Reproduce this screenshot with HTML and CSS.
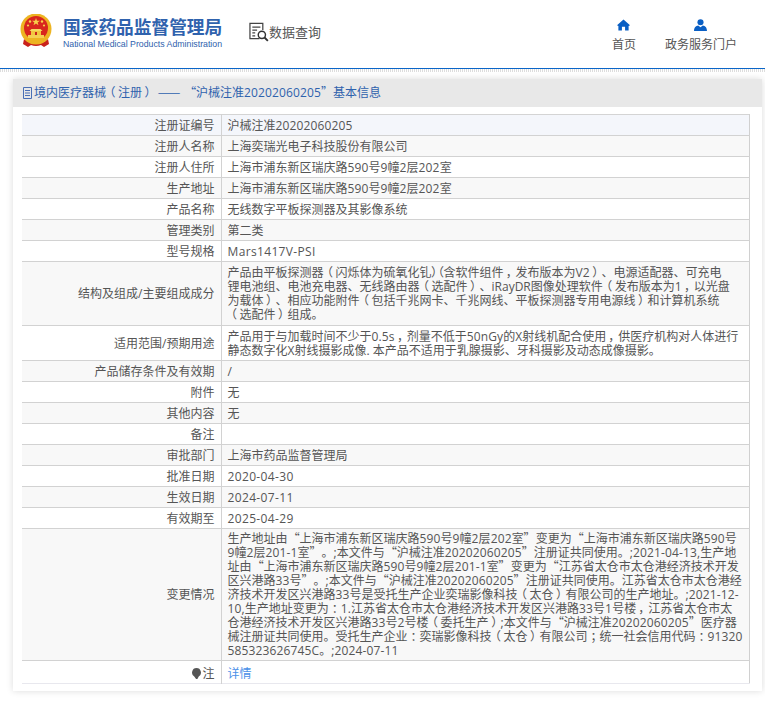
FILE: index.html
```html
<!DOCTYPE html>
<html lang="zh-CN">
<head>
<meta charset="utf-8">
<title>国家药品监督管理局 数据查询</title>
<link rel="stylesheet" href="styles.css">
</head>
<body>
<header class="site-header">
  <div class="brand">
    <svg class="emblem" viewBox="0 0 32 34" aria-hidden="true">
      <path d="M4 25q12 10 24 0l1 5-5 3-3-2q-5 2-10 0l-3 2-5-3z" fill="#c9221c"/>
      <circle cx="16" cy="15" r="15.500" fill="#edb422"/>
      <circle cx="16" cy="14" r="12" fill="#d8261e"/>
      <path d="M6 27q10 6 20 0l-1-3H7z" fill="#edb422"/>
      <path d="M8 21h16v3H8z" fill="#f5cf52"/>
      <path d="M11 17h10v4H11z" fill="#f1c640"/>
      <path d="M9.500 17h13l-2-2h-9z" fill="#f7d860"/>
      <path d="M15 21h2v-3h-2z" fill="#c9221c"/>
      <path d="M16 4l1 2.700h2.900l-2.300 1.700.9 2.800-2.500-1.700-2.500 1.700.9-2.800-2.300-1.700H15z" fill="#f7d04a"/>
      <circle cx="10" cy="7.500" r="1.200" fill="#f7d04a"/><circle cx="22" cy="7.500" r="1.200" fill="#f7d04a"/>
      <circle cx="8" cy="11.500" r="1.100" fill="#f7d04a"/><circle cx="24" cy="11.500" r="1.100" fill="#f7d04a"/>
    </svg>
    <div class="brand-text">
      <div class="brand-cn">国家药品监督管理局</div>
      <div class="brand-en">National Medical Products Administration</div>
    </div>
  </div>
  <div class="query">
    <svg class="query-icon" viewBox="0 0 21 20" aria-hidden="true">
      <path d="M11 17H1V1h13.500v7" fill="none" stroke="#444" stroke-width="1.300"/>
      <path d="M3.500 5h8.500M3.500 8h5M3.500 11h3M3.500 14h3" fill="none" stroke="#444" stroke-width="1.300"/>
      <circle cx="13.500" cy="13" r="3.800" fill="none" stroke="#333" stroke-width="1.500"/>
      <path d="M16.300 15.800l3.500 3.500" stroke="#333" stroke-width="2"/>
    </svg>
    <span>数据查询</span>
  </div>
  <nav class="top-nav">
    <a class="nav-item">
      <svg class="nav-icon" viewBox="0 0 14 12" aria-hidden="true"><path d="M7 0L0 6.200 1.500 7V12h3.800V8h3.400v4h3.800V7L14 6.200z" fill="#0a5fc4"/></svg>
      <span>首页</span>
    </a>
    <a class="nav-item">
      <svg class="nav-icon" viewBox="0 0 14 13" aria-hidden="true"><circle cx="7" cy="3.500" r="3.300" fill="#0a5fc4"/><path d="M0 13c0-4 2-5.500 4.500-6L7 9l2.500-2C12 7.500 14 9 14 13z" fill="#0a5fc4"/></svg>
      <span>政务服务门户</span>
    </a>
  </nav>
</header>
<div class="dots"></div>
<main class="panel">
  <h1 class="panel-title"><svg class="doc" viewBox="0 0 9 12" aria-hidden="true"><path d="M.5.500h8v11h-8zM2 3.500h5M2 6h5M2 8.500h5" fill="none" stroke="#4a6fb5"/></svg>境内医疗器械<span class="p">（</span>注册<span class="p">）</span><span class="dash">——</span><span class="qo">“</span>沪械注准<span class="n">20202060205</span><span class="qc">”</span>基本信息</h1>
  <div class="table-wrap">
  <table class="info">
    <tr class="r hl"><th>注册证编号</th><td>沪械注准<span class="n">20202060205</span></td></tr>
    <tr class="r"><th>注册人名称</th><td>上海奕瑞光电子科技股份有限公司</td></tr>
    <tr class="r"><th>注册人住所</th><td>上海市浦东新区瑞庆路<span class="n">590</span>号<span class="n">9</span>幢<span class="n">2</span>层<span class="n">202</span>室</td></tr>
    <tr class="r"><th>生产地址</th><td>上海市浦东新区瑞庆路<span class="n">590</span>号<span class="n">9</span>幢<span class="n">2</span>层<span class="n">202</span>室</td></tr>
    <tr class="r"><th>产品名称</th><td>无线数字平板探测器及其影像系统</td></tr>
    <tr class="r"><th>管理类别</th><td>第二类</td></tr>
    <tr class="r"><th>型号规格</th><td class="wide">Mars1417V-PSI</td></tr>
    <tr class="h64"><th>结构及组成/主要组成成分</th><td class="long">产品由平板探测器<span class="p">（</span>闪烁体为硫氧化钆<span class="p">）（</span>含软件组件<span class="p">，</span>发布版本为V2<span class="p">）</span>、电源适配器、可充电<br>锂电池组、电池充电器、无线路由器<span class="p">（</span>选配件<span class="p">）</span>、iRayDR图像处理软件<span class="p">（</span>发布版本为<span class="n">1</span><span class="p">，</span>以光盘<br>为载体<span class="p">）</span>、相应功能附件<span class="p">（</span>包括千兆网卡、千兆网线、平板探测器专用电源线<span class="p">）</span>和计算机系统<br><span class="p">（</span>选配件<span class="p">）</span>组成。</td></tr>
    <tr class="h35"><th>适用范围/预期用途</th><td class="long">产品用于与加载时间不少于<span class="n">0.5s</span><span class="p">，</span>剂量不低于<span class="n">50nGy</span>的X射线机配合使用<span class="p">，</span>供医疗机构对人体进行<br>静态数字化X射线摄影成像. 本产品不适用于乳腺摄影、牙科摄影及动态成像摄影。</td></tr>
    <tr class="r"><th>产品储存条件及有效期</th><td>/</td></tr>
    <tr class="r"><th>附件</th><td>无</td></tr>
    <tr class="r"><th>其他内容</th><td>无</td></tr>
    <tr class="r"><th>备注</th><td></td></tr>
    <tr class="r"><th>审批部门</th><td>上海市药品监督管理局</td></tr>
    <tr class="r"><th>批准日期</th><td class="wide">2020-04-30</td></tr>
    <tr class="r"><th>生效日期</th><td class="wide">2024-07-11</td></tr>
    <tr class="r"><th>有效期至</th><td class="wide">2025-04-29</td></tr>
    <tr class="h132"><th>变更情况</th><td class="long">生产地址由<span class="qo">“</span>上海市浦东新区瑞庆路<span class="n">590</span>号<span class="n">9</span>幢<span class="n">2</span>层<span class="n">202</span>室<span class="qc">”</span>变更为<span class="qo">“</span>上海市浦东新区瑞庆路<span class="n">590</span>号<br><span class="n">9</span>幢<span class="n">2</span>层<span class="n">201-1</span>室<span class="qc">”</span>。;本文件与<span class="qo">“</span>沪械注准<span class="n">20202060205</span><span class="qc">”</span>注册证共同使用。;<span class="n">2021-04-13,</span>生产地<br>址由<span class="qo">“</span>上海市浦东新区瑞庆路<span class="n">590</span>号<span class="n">9</span>幢<span class="n">2</span>层<span class="n">201-1</span>室<span class="qc">”</span>变更为<span class="qo">“</span>江苏省太仓市太仓港经济技术开发<br>区兴港路<span class="n">33</span>号<span class="qc">”</span>。;本文件与<span class="qo">“</span>沪械注准<span class="n">20202060205</span><span class="qc">”</span>注册证共同使用。江苏省太仓市太仓港经<br>济技术开发区兴港路<span class="n">33</span>号是受托生产企业奕瑞影像科技<span class="p">（</span>太仓<span class="p">）</span>有限公司的生产地址。;<span class="n">2021-12-</span><br><span class="n">10,</span>生产地址变更为<span class="p">：</span><span class="n">1.</span>江苏省太仓市太仓港经济技术开发区兴港路<span class="n">33</span>号<span class="n">1</span>号楼<span class="p">，</span>江苏省太仓市太<br>仓港经济技术开发区兴港路<span class="n">33</span>号<span class="n">2</span>号楼<span class="p">（</span>委托生产<span class="p">）</span>;本文件与<span class="qo">“</span>沪械注准<span class="n">20202060205</span><span class="qc">”</span>医疗器<br>械注册证共同使用。受托生产企业<span class="p">：</span>奕瑞影像科技<span class="p">（</span>太仓<span class="p">）</span>有限公司<span class="p">；</span>统一社会信用代码<span class="p">：</span><span class="n">91320</span><br><span class="n">585323626745C</span>。;<span class="n">2024-07-11</span></td></tr>
    <tr class="last"><th><svg class="bulb" viewBox="0 0 10 12" aria-hidden="true"><path d="M5 0a5 5 0 0 1 2.500 9.300L6 12H4.500L2.500 9.300A5 5 0 0 1 5 0z" fill="#555"/></svg>注</th><td><a class="more">详情</a></td></tr>
  </table>
  </div>
</main>
</body>
</html>
```
FILE: styles.css
```css
* { box-sizing: border-box; }
html, body { margin: 0; padding: 0; }
body {
  width: 765px;
  height: 701px;
  overflow: hidden;
  background: #fff;
  color: #555;
  font-family: "Open Sans", "Noto Sans CJK SC", sans-serif;
  font-size: 12px;
}
.site-header {
  height: 69px;
  display: flex;
  align-items: flex-start;
  border-bottom: 1px solid #0a66c8;
  padding-left: 20px;
}
.brand { display: flex; gap: 11px; padding-top: 14px; width: 229px; flex: none; }
.emblem { width: 32px; height: 34px; flex: none; }
.brand-text { padding-top: 1px; }
.brand-cn { font-size: 17.700px; line-height: 22px; font-weight: 700; color: #2f62ad; white-space: nowrap; font-family: "Noto Sans CJK SC", sans-serif; }
.brand-en { font-size: 8.750px; line-height: 13px; margin-top: 1px; color: #2f62ad; white-space: nowrap; font-family: "Liberation Sans", sans-serif; }
.query { display: flex; align-items: center; padding-top: 22px; font-size: 13px; line-height: 18px; color: #555; font-family: "Noto Sans CJK SC", sans-serif; }
.query-icon { width: 20px; height: 20px; }
.top-nav { display: flex; margin-left: auto; padding-top: 19px; padding-right: 28px; gap: 29px; }
.nav-item { display: flex; flex-direction: column; align-items: center; color: #555; font-size: 12px; line-height: 16px; font-family: "Noto Sans CJK SC", sans-serif; }
.nav-icon { width: 13px; height: 12px; margin-bottom: 5px; }
.dots { height: 3px; background: repeating-linear-gradient(90deg, #ddd 0 1px, #fff 1px 2px); }
.panel {
  margin: 7px 3px 0 13px;
  box-shadow: 0 0 7px rgba(0,0,0,.14);
  background: #fff;
  height: 612px;
}
.panel-title {
  margin: 0;
  height: 28px;
  background: #e8e8e8;
  padding-left: 10px;
  font-weight: 400;
  font-size: 12px;
  line-height: 28px;
  color: #2f62ad;
  white-space: nowrap;
}
.doc { width: 9px; height: 12px; vertical-align: -2px; margin-right: 2px; }
.p { display: inline-block; width: 12px; line-height: 0; text-align: center; font-feature-settings: "palt"; font-family: "Noto Sans CJK SC", sans-serif; }
.qo, .qc { display: inline-block; width: 12px; line-height: 0; font-family: "Noto Sans CJK SC", sans-serif; font-feature-settings: "palt"; }
.qo { text-align: right; }
.qc { text-align: left; }
.n { letter-spacing: .14px; }
.dash { display: inline-block; width: 30px; text-align: center; font-size: 13.500px; line-height: 0; font-family: "Noto Sans CJK SC", sans-serif; }
.table-wrap { padding: 7px 0 0 9px; }
.info {
  width: 728px;
  border-collapse: collapse;
  table-layout: fixed;
  border-top: 1px solid #d4d4d4;
  border-right: 1px solid #d0d0d0;
}
.info tr:nth-child(odd) { background: #fff; }
.info tr:nth-child(even) { background: #f8f8f8; }
.info tr.hl { background: #f4f6fb; }
.info tr { border-bottom: 1px solid #d2d2d2; }
.info th, .info td { padding: 1px 6px 0; font-weight: 400; line-height: 14px; vertical-align: middle; white-space: nowrap; }
.info th { width: 199px; text-align: right; border-right: 1px solid #d2d2d2; }
.info td { text-align: left; }
.info .wide { letter-spacing: .35px; }
.info .r { height: 21px; }
.info .h64 { height: 64px; }
.info .h35 { height: 35px; }
.info .h132 { height: 132px; }
.info tr.last { background: #fff; border-bottom: 1px solid #e8e8ee; height: 23px; }
.info tr.last th, .info tr.last td { padding-top: 3px; }
.bulb { width: 9px; height: 11px; vertical-align: -1px; margin-right: 1px; }
.more { color: #4a90e8; }
```
